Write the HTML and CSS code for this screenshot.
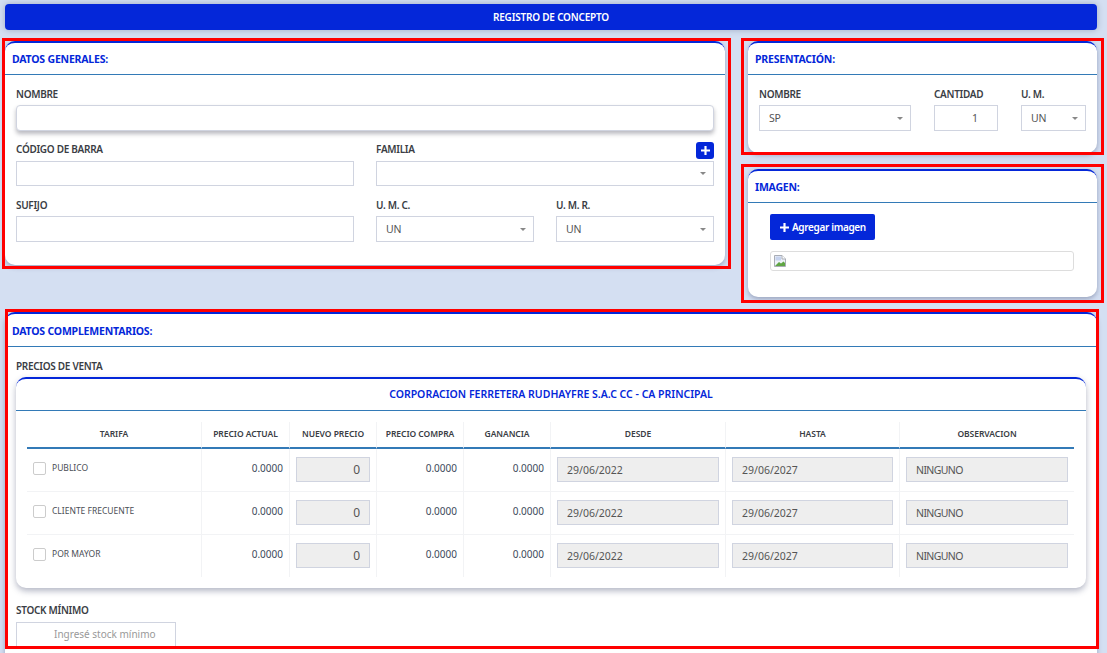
FILE: index.html
```html
<!DOCTYPE html>
<html lang="es">
<head>
<meta charset="utf-8">
<title>Registro de concepto</title>
<link rel="stylesheet" href="styles.css">
</head>
<body>
<div class="page">
  <div class="title-bar">REGISTRO DE CONCEPTO</div>

  <div class="top-grid">
    <section class="card">
      <h2 class="card-head">DATOS GENERALES:</h2>
      <div class="card-body">
        <div class="field">
          <label class="label">NOMBRE</label>
          <input class="input input-raised" type="text">
        </div>
        <div class="two-col row-gap-a">
          <div class="field">
            <label class="label">CÓDIGO DE BARRA</label>
            <input class="input input-short" type="text">
          </div>
          <div class="field">
            <div class="label-row">
              <label class="label">FAMILIA</label>
              <button class="mini-add" type="button" aria-label="Agregar familia">
                <svg class="plus" viewBox="0 0 10 10"><path d="M3.8 0h2.4v3.8H10v2.4H6.2V10H3.8V6.2H0V3.8h3.8z"/></svg>
              </button>
            </div>
            <div class="select select-short"><span class="select-value"></span><i class="caret"></i></div>
          </div>
        </div>
        <div class="two-col row-gap-b">
          <div class="field">
            <label class="label">SUFIJO</label>
            <input class="input" type="text">
          </div>
          <div class="two-col">
            <div class="field">
              <label class="label">U. M. C.</label>
              <div class="select"><span class="select-value">UN</span><i class="caret"></i></div>
            </div>
            <div class="field">
              <label class="label">U. M. R.</label>
              <div class="select"><span class="select-value">UN</span><i class="caret"></i></div>
            </div>
          </div>
        </div>
      </div>
    </section>

    <div class="side">
      <section class="card">
        <h2 class="card-head">PRESENTACIÓN:</h2>
        <div class="card-body presentation">
          <div class="field">
            <label class="label">NOMBRE</label>
            <div class="select"><span class="select-value">SP</span><i class="caret"></i></div>
          </div>
          <div class="field">
            <label class="label">CANTIDAD</label>
            <input class="input input-qty" type="text" value="1">
          </div>
          <div class="field">
            <label class="label">U. M.</label>
            <div class="select"><span class="select-value">UN</span><i class="caret"></i></div>
          </div>
        </div>
      </section>

      <section class="card">
        <h2 class="card-head">IMAGEN:</h2>
        <div class="card-body image-body">
          <button class="add-image" type="button">
            <svg class="plus" viewBox="0 0 10 10"><path d="M3.8 0h2.4v3.8H10v2.4H6.2V10H3.8V6.2H0V3.8h3.8z"/></svg>
            Agregar imagen
          </button>
          <div class="image-box">
            <svg class="broken" viewBox="0 0 12 12">
              <path d="M.5.5h7.5l3.5 3.5v7.500H.5z" fill="#eef1f8" stroke="#a9adb5"/>
              <path d="M8 .5V4h3.500" fill="#fff" stroke="#a9adb5"/>
              <path d="M1.500 1.500h5.500v4h-5.500z" fill="#c6d3ee"/>
              <path d="M1 11l4-4 2 1.500 2.500-2 1.500 1.500V11z" fill="#5fa544"/>
            </svg>
          </div>
        </div>
      </section>
    </div>
  </div>

  <section class="card card-wide">
    <h2 class="card-head">DATOS COMPLEMENTARIOS:</h2>
    <div class="card-body">
      <div class="field">
        <label class="label">PRECIOS DE VENTA</label>
        <div class="card price-card">
          <h3 class="price-title">CORPORACION FERRETERA RUDHAYFRE S.A.C CC - CA PRINCIPAL</h3>
          <div class="price-body">
            <table class="prices">
              <colgroup>
                <col class="col-a"><col class="col-b"><col class="col-c"><col class="col-c"><col class="col-c"><col class="col-d"><col class="col-a"><col class="col-d">
              </colgroup>
              <thead>
                <tr>
                  <th>TARIFA</th><th>PRECIO ACTUAL</th><th>NUEVO PRECIO</th><th>PRECIO COMPRA</th><th>GANANCIA</th><th>DESDE</th><th>HASTA</th><th>OBSERVACION</th>
                </tr>
              </thead>
              <tbody>
                <tr>
                  <td class="name-cell"><span class="check"></span><span class="name">PUBLICO</span></td>
                  <td class="num">0.0000</td>
                  <td><input class="input input-off input-num" type="text" value="0" disabled></td>
                  <td class="num">0.0000</td>
                  <td class="num">0.0000</td>
                  <td><input class="input input-off" type="text" value="29/06/2022" disabled></td>
                  <td><input class="input input-off" type="text" value="29/06/2027" disabled></td>
                  <td><input class="input input-off input-note" type="text" value="NINGUNO" disabled></td>
                </tr>
                <tr>
                  <td class="name-cell"><span class="check"></span><span class="name">CLIENTE FRECUENTE</span></td>
                  <td class="num">0.0000</td>
                  <td><input class="input input-off input-num" type="text" value="0" disabled></td>
                  <td class="num">0.0000</td>
                  <td class="num">0.0000</td>
                  <td><input class="input input-off" type="text" value="29/06/2022" disabled></td>
                  <td><input class="input input-off" type="text" value="29/06/2027" disabled></td>
                  <td><input class="input input-off input-note" type="text" value="NINGUNO" disabled></td>
                </tr>
                <tr>
                  <td class="name-cell"><span class="check"></span><span class="name">POR MAYOR</span></td>
                  <td class="num">0.0000</td>
                  <td><input class="input input-off input-num" type="text" value="0" disabled></td>
                  <td class="num">0.0000</td>
                  <td class="num">0.0000</td>
                  <td><input class="input input-off" type="text" value="29/06/2022" disabled></td>
                  <td><input class="input input-off" type="text" value="29/06/2027" disabled></td>
                  <td><input class="input input-off input-note" type="text" value="NINGUNO" disabled></td>
                </tr>
              </tbody>
            </table>
          </div>
        </div>
      </div>
      <div class="field stock">
        <label class="label">STOCK MÍNIMO</label>
        <input class="input input-stock" type="text" placeholder="Ingresé stock mínimo">
      </div>
    </div>
  </section>

  <div class="mark mark-general"></div>
  <div class="mark mark-presentation"></div>
  <div class="mark mark-image"></div>
  <div class="mark mark-extra"></div>
</div>
</body>
</html>
```

FILE: styles.css
```css
* { box-sizing: border-box; }
html, body { margin: 0; height: 100%; overflow: hidden; }
body {
  background: #d4dff2;
  font-family: "Noto Sans", "Open Sans", sans-serif;
  color: #3c4048;
}
.page { position: relative; padding: 4px 10px 0 5px; }

.title-bar {
  height: 26px;
  line-height: 26px;
  border-radius: 4px;
  background: #0427d9;
  color: #fff;
  font-size: 10px;
  font-weight: 600;
  letter-spacing: -.2px;
  text-align: center;
  box-shadow: 0 0 6px rgba(40, 50, 90, .3);
}

.top-grid {
  display: grid;
  grid-template-columns: 720px 349px;
  gap: 23px;
  align-items: start;
  margin-top: 11px;
}
.side { display: flex; flex-direction: column; gap: 16px; }

.card {
  background: #fff;
  border-top: 2px solid #0427d9;
  border-radius: 10px;
  box-shadow: 0 2px 5px rgba(40, 50, 90, .35);
}
.card-wide { margin-top: 15px; padding-bottom: 30px; }
.card-head {
  height: 32px;
  margin: 0;
  padding: 0 7px;
  border-bottom: 1px solid #337ab7;
  color: #0427d9;
  font-size: 10.5px;
  font-weight: 700;
  line-height: 33px;
  letter-spacing: -.2px;
}
.card-wide > .card-head { height: 33px; line-height: 35px; }
.card-body { padding: 11px 11px 23px; }

.field { display: flex; flex-direction: column; min-width: 0; }
.label {
  display: block;
  height: 16px;
  margin-bottom: 3px;
  font-size: 10px;
  font-weight: 600;
  line-height: 16px;
  letter-spacing: -.3px;
  color: #3a3d44;
}
.label-row { display: flex; justify-content: space-between; align-items: flex-start; height: 20px; }

.two-col { display: grid; grid-template-columns: 1fr 1fr; gap: 22px; }
.row-gap-a { margin-top: 10px; }
.row-gap-a .label { margin-bottom: 4px; }
.row-gap-b { margin-top: 11px; }

.input, .select {
  width: 100%;
  height: 26px;
  border: 1px solid #d0d4e0;
  background: #fff;
  color: #555;
  font-family: inherit;
  font-size: 10.5px;
}
.input { display: block; padding: 0 9px; outline: none; }
.input-raised { border-radius: 4px; box-shadow: 0 3px 4px rgba(30, 30, 50, .3); }
.input-short, .select-short { height: 25px; }
.input-qty { text-align: right; padding-right: 19px; }
.input-off { height: 25px; background: #eee; opacity: 1; }
.input-num { text-align: right; padding-right: 9px; font-size: 12px; }
.input-note { letter-spacing: -.6px; }
.input-stock { width: 160px; padding: 0 0 2px 37px; font-size: 10px; }
.input-stock::placeholder { color: #999; opacity: 1; }

.select { display: flex; align-items: center; justify-content: space-between; padding: 0 7px 0 9px; }
.select-value { font-size: 10.5px; padding-bottom: 1px; letter-spacing: -.2px; }
.caret {
  width: 0;
  height: 0;
  border-top: 3px solid #888;
  border-left: 3px solid transparent;
  border-right: 3px solid transparent;
}

.mini-add {
  display: flex;
  align-items: center;
  justify-content: center;
  width: 18px;
  height: 17px;
  margin-top: 1px;
  padding: 0;
  border: 0;
  border-radius: 3px;
  background: #0427d9;
}
.plus { display: block; width: 9px; height: 9px; fill: #fff; }

.presentation { display: grid; grid-template-columns: 152px 64px 65px; gap: 23px; padding-bottom: 22px; }

.image-body { padding: 11px 23px 26px 22px; }
.add-image {
  display: flex;
  align-items: center;
  gap: 3px;
  width: 105px;
  height: 26px;
  padding: 0 0 0 10px;
  border: 0;
  border-radius: 2px;
  background: #0427d9;
  color: #fff;
  font-family: inherit;
  font-size: 10px;
  font-weight: 600;
  letter-spacing: -.35px;
}
.image-box {
  height: 20px;
  margin-top: 11px;
  padding: 3px 0 0 3px;
  border: 1px solid #ddd;
  border-radius: 3px;
}
.broken { display: block; width: 12px; height: 12px; }

.price-card { box-shadow: 0 3px 6px rgba(40, 50, 90, .35); }
.price-title {
  height: 32px;
  margin: 0;
  border-bottom: 1px solid #337ab7;
  color: #0427d9;
  font-size: 10.5px;
  font-weight: 600;
  line-height: 31px;
  text-align: center;
}
.price-body { padding: 11px 12px 11px 11px; }

.prices { width: 1047px; table-layout: fixed; border-collapse: separate; border-spacing: 0; }
.col-a { width: 174px; }
.col-b { width: 88px; }
.col-c { width: 87px; }
.col-d { width: 175px; }
.prices th {
  height: 27px;
  padding: 0 0 2px;
  border-left: 1px solid #f2f3f5;
  border-bottom: 2px solid #337ab7;
  font-size: 8.5px;
  font-weight: 600;
  letter-spacing: -.05px;
  color: #3a3d44;
}
.prices td {
  height: 43px;
  padding: 8px 6px 0;
  border-left: 1px solid #f2f3f5;
  border-bottom: 1px solid #f2f3f5;
  vertical-align: top;
}
.prices tbody tr:last-child td { height: 42px; border-bottom: 0; }
.prices th:first-child, .prices td:first-child { border-left: 0; }
.prices td.num { padding-top: 12px; font-size: 10px; line-height: 14px; text-align: right; color: #3d4a5c; }
.prices td.name-cell { padding-top: 13px; white-space: nowrap; }
.check {
  display: inline-block;
  width: 13px;
  height: 13px;
  margin-right: 6px;
  border: 1px solid #ccc;
  border-radius: 2px;
  vertical-align: top;
}
.name { display: inline-block; font-size: 8.500px; line-height: 12px; color: #4a4e55; vertical-align: top; }

.stock { margin-top: 14px; }
.stock .label { margin-bottom: 4px; }

.mark { position: absolute; border: 3px solid #f00; pointer-events: none; }
.mark-general { left: 2px; top: 38px; width: 729px; height: 231px; }
.mark-presentation { left: 741px; top: 38px; width: 363px; height: 117px; }
.mark-image { left: 741px; top: 164px; width: 363px; height: 139px; }
.mark-extra { left: 5px; top: 309px; width: 1094px; height: 340px; }
```
